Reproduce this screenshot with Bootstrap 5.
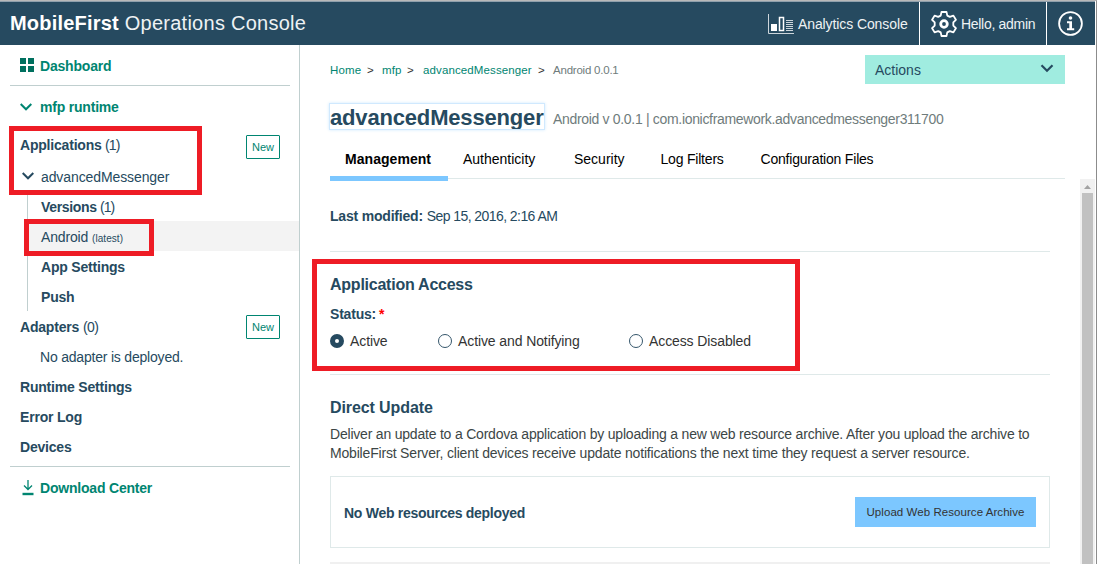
<!DOCTYPE html>
<html lang="en">
<head>
<meta charset="utf-8">
<title>MobileFirst Operations Console</title>
<meta name="viewport" content="width=device-width, initial-scale=1">
<link href="https://cdn.jsdelivr.net/npm/bootstrap@5.3.0/dist/css/bootstrap.min.css" rel="stylesheet">
<style>
:root { --navy:#264a60; --green:#008571; --line:#dfe9e9; --side:#c0cfcf; --red:#ee1c25; }
body { font-family:"Liberation Sans",Arial,sans-serif; font-size:14px; line-height:20px; color:var(--navy); width:1097px; height:564px; overflow:hidden; background:#fff; }
svg { display:block; flex:none; }
a { color:inherit; text-decoration:none; }
b, .fw-bold { letter-spacing:-.2px; }
.window { height:564px; border-top:1px solid #b8b8b8; border-right:1px solid #8c8c8c; padding-right:1px; }
.topbar { height:44px; background:var(--navy); border-top:1px solid #8fa0ac; color:#fff; padding:0 0 0 10px; flex:none; }
.brand { font-size:20px; letter-spacing:.26px; line-height:43px; }
.brand b { letter-spacing:.2px; }
.brand span { color:#eef2f4; }
.top-item { height:43px; color:#eef2f4; }
.top-item + .top-item { border-left:1px solid #fff; }
.sidebar { width:300px; border-right:1px solid var(--side); flex:none; }
.side-row { height:30px; padding:2px 20px 0; }
.side-row.sub { padding-left:41px; }
.side-row.even { padding-top:0; }
.side-hr { height:1px; background:var(--side); margin:0 9px 0 10px; }
.green { color:var(--green); }
.count { letter-spacing:-.9px; margin-left:-.5px; }
.ico { width:20px; flex:none; }
.tree { border-left:1px solid var(--side); margin-left:27px; }
.tree .side-row { padding-left:13px; }
.chosen { background:#f3f3f3; }
.btn-new { border:1px solid var(--green); color:var(--green); font-size:11px; line-height:22px; height:24px; width:34px; text-align:center; border-radius:1px; margin:3px -1px 0 0; }
.crumbs { font-size:11.5px; letter-spacing:.12px; line-height:16px; height:16px; }
.crumbs a { color:var(--green); }
.crumbs i { font-style:normal; color:#333; letter-spacing:0; }
.muted { color:#6f7c7c; }
.actions { width:200px; height:29px; background:#a0ece0; padding:0 10px; }
.page-title { font-size:22px; line-height:27px; letter-spacing:-.17px; font-weight:700; margin:0; box-shadow:0 0 3px 1px #cfe9ff; outline:1px solid #d0e9fe; width:214px; height:25px; }
.tabs { height:36px; width:735px; border-bottom:1px solid var(--line); color:#000; }
.tabs a { padding-top:6px; }
.tabs .on { width:118px; height:38px; border-bottom:5px solid #7cc7ff; padding-left:15px; letter-spacing:.05px; }
.pane { width:720px; }
.rule { height:1px; background:var(--line); }
h2 { font-size:16px; font-weight:700; line-height:20px; letter-spacing:-.24px; margin:0; }
.radio { width:14px; height:14px; border:1px solid #35566b; border-radius:50%; margin-right:6px; margin-top:3px; background:#fff; }
.radio.on { border:5px solid var(--navy); }
.opt { color:#333; letter-spacing:-.1px; }
.star { color:#f00; }
.desc { color:#3c4646; line-height:19px; letter-spacing:-.205px; margin:0; white-space:nowrap; }
.res { height:72px; border:1px solid var(--line); padding:0 13px; }
.btn-up { background:#7cc7ff; color:#333; font-size:11.5px; letter-spacing:.06px; height:30px; width:181px; line-height:30px; text-align:center; }
.scroll { width:15px; background:#f1f1f1; flex:none; }
.thumb { width:11px; background:#c1c1c1; flex:1; }
.mark-box { position:absolute; border:5px solid var(--red); }
.m1 { left:9px; top:126px; width:193px; height:69px; }
.m2 { left:24px; top:219px; width:130px; height:37px; }
.m3 { left:312px; top:259px; width:488px; height:112px; }
</style>
</head>
<body>
<div class="window d-flex flex-column">
  <header class="topbar d-flex justify-content-between">
    <div class="brand"><b>MobileFirst</b> <span>Operations Console</span></div>
    <nav class="d-flex">
      <a class="top-item d-flex align-items-center" href="#" style="width:151px">
        <svg width="26" height="20" viewBox="0 0 26 20" fill="none" stroke="#fff"><path d="M.5 0V19.500H26" stroke="#ccd5db"/><rect x="3" y="10" width="6" height="7" fill="#fff" stroke="none"/><rect x="11.500" y="3.500" width="4" height="13" stroke-width="1.500"/><path d="M18 6.500h7M18 8.500h7M18 10.500h7M18 12.500h7M18 14.500h7M18 16.500h7" stroke="#ccd5db"/></svg>
        <span style="margin-left:4px;letter-spacing:-.1px">Analytics Console</span>
      </a>
      <a class="top-item d-flex align-items-center" href="#" style="width:127px;padding-left:11px">
        <svg width="26" height="26" viewBox="0 0 26 26" fill="none" stroke="#fff" stroke-width="1.800" stroke-linejoin="round"><path d="M10.500 1h5l.8 3.600 2.500 1.300 3.600-1.300 2.500 4.200-2.600 2.600v3.200l2.600 2.600-2.500 4.200-3.600-1.300-2.500 1.300-.8 3.600h-5l-.8-3.600-2.500-1.300-3.600 1.300-2.500-4.200 2.600-2.600v-3.200L1.100 8.800l2.500-4.200 3.600 1.300 2.500-1.300z"/><circle cx="13" cy="13" r="3.300" stroke-width="2.800"/></svg>
        <span style="margin-left:4px;letter-spacing:-.3px">Hello, admin</span>
      </a>
      <a class="top-item d-flex align-items-center" href="#" style="width:49px;padding-left:11px">
        <svg width="25" height="25" viewBox="0 0 25 25"><circle cx="12.500" cy="12.500" r="11.400" fill="none" stroke="#fff" stroke-width="1.800"/><circle cx="12.500" cy="7" r="1.800" fill="#fff"/><path d="M9 10.200h5v7h2.200v2H9v-2h2.300v-5H9z" fill="#fff"/></svg>
      </a>
    </nav>
  </header>

  <div class="d-flex flex-grow-1">
    <aside class="sidebar">
      <div class="side-row d-flex align-items-center green" style="height:40px"><span class="ico"><svg width="14" height="14" fill="#00705f" style="margin-top:-2px"><path d="M0 0h6v6H0zM8 0h6v6H8zM0 8h6v6H0zM8 8h6v6H8z"/></svg></span><b>Dashboard</b></div>
      <div class="side-hr"></div>
      <div class="side-row even d-flex align-items-center green" style="height:43px;padding-bottom:2px"><span class="ico"><svg width="12" height="8" fill="none" stroke="#008571" stroke-width="2"><path d="M.7 1 6 6.300 11.300 1"/></svg></span><b>mfp runtime</b></div>
      <div class="side-row even d-flex align-items-center justify-content-between" style="height:32px"><span><b>Applications</b> <span class="count">(1)</span></span><a class="btn-new" href="#">New</a></div>
      <div class="side-row d-flex align-items-center"><span class="ico" style="width:21px;padding-left:2px"><svg width="12" height="8" fill="none" stroke="#264a60" stroke-width="2" style="margin-top:-2px"><path d="M.7 1 6 6.300 11.300 1"/></svg></span><span style="letter-spacing:-.1px">advancedMessenger</span></div>
      <div class="tree">
        <div class="side-row d-flex align-items-center"><span><b style="letter-spacing:-.35px">Versions</b> <span class="count">(1)</span></span></div>
        <div class="side-row d-flex align-items-center chosen"><span style="margin-top:1px"><span style="letter-spacing:-.15px">Android</span> <span style="font-size:10px;letter-spacing:.05px">(latest)</span></span></div>
        <div class="side-row d-flex align-items-center"><b>App Settings</b></div>
        <div class="side-row d-flex align-items-center"><b>Push</b></div>
      </div>
      <div class="side-row d-flex align-items-center justify-content-between"><span><b>Adapters</b> <span style="letter-spacing:-.6px">(0)</span></span><a class="btn-new" href="#" style="margin-top:-1px">New</a></div>
      <div class="side-row d-flex align-items-center" style="padding-left:40px;letter-spacing:-.2px">No adapter is deployed.</div>
      <div class="side-row d-flex align-items-center"><b>Runtime Settings</b></div>
      <div class="side-row d-flex align-items-center"><b>Error Log</b></div>
      <div class="side-row d-flex align-items-center"><b>Devices</b></div>
      <div class="side-hr" style="margin-top:5px"></div>
      <div class="side-row even d-flex align-items-center green" style="height:42px"><span class="ico" style="padding-left:2px"><svg width="12" height="16" fill="none" stroke="#008571" stroke-width="1.300"><path d="M6 0v9.500M2 5.500l4 4 4-4"/><path d="M.5 14h11" stroke-width="2.400"/></svg></span><b>Download Center</b></div>
    </aside>

    <main class="flex-grow-1 d-flex flex-column" style="padding-left:30px">
      <div class="d-flex justify-content-between" style="padding:10px 30px 0 0;height:39px">
        <nav class="crumbs d-flex" style="margin-top:7px"><a href="#" style="width:37px">Home</a><i style="width:15px">&gt;</i><a href="#" style="width:25px">mfp</a><i style="width:16px">&gt;</i><a href="#" style="width:115px">advancedMessenger</a><i style="width:15px">&gt;</i><span class="muted" style="letter-spacing:-.22px">Android 0.0.1</span></nav>
        <div class="actions d-flex align-items-center justify-content-between"><span>Actions</span><svg width="14" height="9" fill="none" stroke="#264a60" stroke-width="2.200" style="margin-top:-2px;margin-right:1px"><path d="M1.500 1.200 7 6.700 12.500 1.200"/></svg></div>
      </div>
      <div class="d-flex" style="margin-top:20px;height:39px">
        <h1 class="page-title">advancedMessenger</h1>
        <span class="muted" style="margin:5px 0 0 9px;letter-spacing:-.32px">Android v 0.0.1 | com.ionicframework.advancedmessenger311700</span>
      </div>
      <nav class="tabs d-flex">
        <a class="on fw-bold" href="#">Management</a><a href="#" style="width:111px;margin-left:15px">Authenticity</a><a href="#" style="width:86.5px">Security</a><a href="#" style="width:100px;letter-spacing:-.2px">Log Filters</a><a href="#" style="letter-spacing:-.2px">Configuration Files</a>
      </nav>
      <div class="d-flex flex-grow-1 justify-content-between">
        <section class="pane">
          <div style="padding-top:27px;height:72px"><b>Last modified:</b> <span style="letter-spacing:-.57px">Sep 15, 2016, 2:16 AM</span></div>
          <div class="rule"></div>
          <div style="padding-top:23px;height:122px">
            <h2>Application Access</h2>
            <div style="margin-top:9px"><b>Status:</b> <b class="star" style="margin-left:-1px">*</b></div>
            <div class="d-flex opt" style="margin-top:7px">
              <span class="d-flex" style="width:108px"><span class="radio on"></span>Active</span>
              <span class="d-flex" style="width:191px"><span class="radio"></span>Active and Notifying</span>
              <span class="d-flex"><span class="radio"></span>Access Disabled</span>
            </div>
          </div>
          <div class="rule"></div>
          <h2 style="margin-top:23px;letter-spacing:-.1px">Direct Update</h2>
          <p class="desc" style="margin-top:7px">Deliver an update to a Cordova application by uploading a new web resource archive. After you upload the archive to<br><span style="letter-spacing:-.185px">MobileFirst Server, client devices receive update notifications the next time they request a server resource.</span></p>
          <div class="res d-flex align-items-center justify-content-between" style="margin-top:13px"><b style="letter-spacing:-.28px;padding-top:2px">No Web resources deployed</b><a class="btn-up" href="#">Upload Web Resource Archive</a></div>
          <div style="height:2px;margin-top:14px;background:#f0f0f0"></div>
        </section>
        <div class="scroll d-flex flex-column align-items-center">
          <svg width="15" height="14"><path d="M4 10h7L7.500 6z" fill="#a3a3a3"/></svg>
          <div class="thumb"></div>
        </div>
      </div>
    </main>
  </div>
</div>
<div class="mark-box m1"></div><div class="mark-box m2"></div><div class="mark-box m3"></div>
<script src="https://cdn.jsdelivr.net/npm/bootstrap@5.3.0/dist/js/bootstrap.bundle.min.js"></script>
</body>
</html>
